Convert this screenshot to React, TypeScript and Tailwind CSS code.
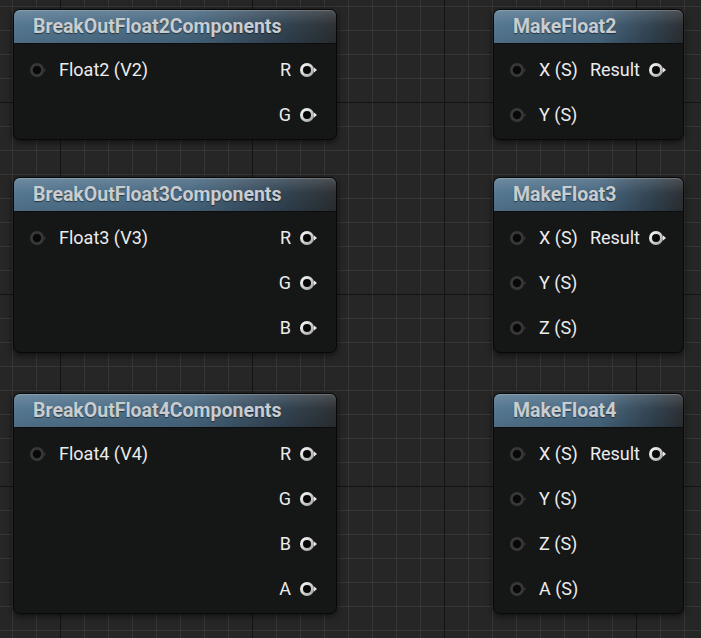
const breakNodes = [
  { title: 'BreakOutFloat2Components', input: 'Float2 (V2)', outputs: ['R', 'G'], top: 'top-[9px]' },
  { title: 'BreakOutFloat3Components', input: 'Float3 (V3)', outputs: ['R', 'G', 'B'], top: 'top-[177px]' },
  { title: 'BreakOutFloat4Components', input: 'Float4 (V4)', outputs: ['R', 'G', 'B', 'A'], top: 'top-[393px]' },
];

const makeNodes = [
  { title: 'MakeFloat2', inputs: ['X (S)', 'Y (S)'], top: 'top-[9px]' },
  { title: 'MakeFloat3', inputs: ['X (S)', 'Y (S)', 'Z (S)'], top: 'top-[177px]' },
  { title: 'MakeFloat4', inputs: ['X (S)', 'Y (S)', 'Z (S)', 'A (S)'], top: 'top-[393px]' },
];

function InPin() {
  return (
    <svg width="20" height="16" viewBox="0 0 20 16" className="shrink-0">
      <circle cx="8" cy="8" r="5.6" fill="#080808" stroke="#383838" strokeWidth="2.8" />
      <polygon points="14.6,5.6 17.4,8 14.6,10.4" fill="#2e2e2e" />
    </svg>
  );
}

function OutPin() {
  return (
    <svg width="20" height="16" viewBox="0 0 20 16" className="shrink-0">
      <defs>
        <linearGradient id="ring" x1="0" y1="0" x2="1" y2="1">
          <stop offset="0" stopColor="#f8f8f8" />
          <stop offset="1" stopColor="#a8a8a8" />
        </linearGradient>
      </defs>
      <circle cx="8" cy="8" r="5.5" fill="#070707" stroke="url(#ring)" strokeWidth="3" />
      <polygon points="14.8,5.3 18,8 14.8,10.7" fill="#e8e8e8" />
    </svg>
  );
}

function Header({ title }: { title: string }) {
  return (
    <div className="h-[34px] rounded-t-[6px] border-b border-[#0d0d0d] bg-[linear-gradient(180deg,rgba(255,255,255,0.16)_0%,rgba(255,255,255,0.02)_45%,rgba(0,0,0,0.08)_100%),linear-gradient(90deg,#52758f_0%,#46667f_55%,#2f3f4d_85%,#2a2d31_100%)] pl-[19px] flex items-center shadow-[inset_0_1px_0_rgba(255,255,255,0.18)]">
      <span className="text-[19.5px] leading-none font-bold text-[#c8cdd1] [text-shadow:0_1px_1px_rgba(0,0,0,0.5)]">{title}</span>
    </div>
  );
}

function BreakNode({ title, input, outputs, top }: (typeof breakNodes)[number]) {
  return (
    <div className={`absolute left-[13px] ${top} w-[324px] rounded-[7px] bg-[#151616] border border-[#080808] shadow-[0_2px_6px_rgba(0,0,0,0.6)]`}>
      <Header title={title} />
      <div className="pt-[3px] pb-[2px]">
        {outputs.map((o, i) => (
          <div key={o} className="h-[45px] flex items-center justify-between pl-[15px] pr-[17px]">
            <div className="flex items-center gap-[10px]">
              {i === 0 && <InPin />}
              {i === 0 && <span className="text-[18px] text-[#ececec]">{input}</span>}
            </div>
            <div className="flex items-center gap-[8px]">
              <span className="text-[18px] text-[#ececec]">{o}</span>
              <OutPin />
            </div>
          </div>
        ))}
      </div>
    </div>
  );
}

function MakeNode({ title, inputs, top }: (typeof makeNodes)[number]) {
  return (
    <div className={`absolute left-[493px] ${top} w-[191px] rounded-[7px] bg-[#151616] border border-[#080808] shadow-[0_2px_6px_rgba(0,0,0,0.6)]`}>
      <Header title={title} />
      <div className="pt-[3px] pb-[2px]">
        {inputs.map((inp, i) => (
          <div key={inp} className="h-[45px] flex items-center justify-between pl-[15px] pr-[15px]">
            <div className="flex items-center gap-[10px]">
              <InPin />
              <span className="text-[18px] text-[#ececec]">{inp}</span>
            </div>
            {i === 0 && (
              <div className="flex items-center gap-[8px]">
                <span className="text-[18px] text-[#ececec]">Result</span>
                <OutPin />
              </div>
            )}
          </div>
        ))}
      </div>
    </div>
  );
}

function Grid() {
  return (
    <svg className="absolute inset-0" width="701" height="638">
      <defs>
        <pattern id="minor" x="12" y="6" width="24" height="24" patternUnits="userSpaceOnUse">
          <path d="M0.5 0 V24 M0 0.5 H24" stroke="#363636" strokeWidth="1" />
        </pattern>
        <pattern id="major" x="60" y="102" width="192" height="192" patternUnits="userSpaceOnUse">
          <path d="M0.5 0 V192 M0 0.5 H192" stroke="#141414" strokeWidth="1" />
        </pattern>
      </defs>
      <rect width="701" height="638" fill="#262626" />
      <rect width="701" height="638" fill="url(#minor)" />
      <rect width="701" height="638" fill="url(#major)" />
    </svg>
  );
}

export default function App() {
  return (
    <div className="relative w-[701px] h-[638px] overflow-hidden bg-[#262626] font-['Roboto',sans-serif]">
      <Grid />
      {breakNodes.map((n) => (
        <BreakNode key={n.title} {...n} />
      ))}
      {makeNodes.map((n) => (
        <MakeNode key={n.title} {...n} />
      ))}
    </div>
  );
}
